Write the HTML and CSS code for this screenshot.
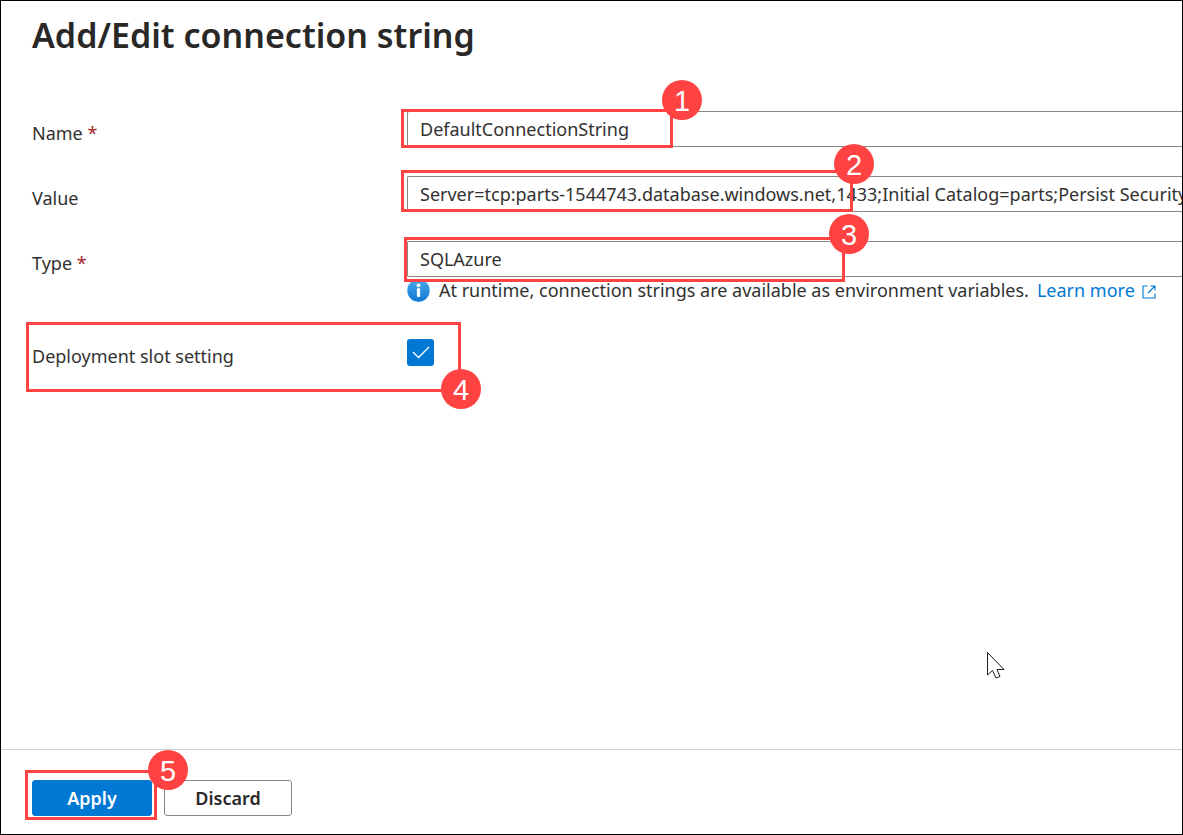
FILE: index.html
```html
<!DOCTYPE html>
<html lang="en">
<head>
<meta charset="utf-8">
<meta name="viewport" content="width=device-width, initial-scale=1">
<title>Add/Edit connection string</title>
<link rel="stylesheet" href="styles.css">
</head>
<body>
<form class="panel">
  <header class="panel-header">
    <h1 class="title">Add/Edit connection string</h1>
  </header>

  <main class="fields">
    <div class="row">
      <label class="label" for="name">Name <span class="required">*</span></label>
      <div class="control">
        <input class="box" id="name" type="text" value="DefaultConnectionString" required>
        <div class="callout callout-name"><span class="badge">1</span></div>
      </div>
    </div>
    <div class="row">
      <label class="label" for="value">Value</label>
      <div class="control">
        <input class="box" id="value" type="text" value="Server=tcp:parts-1544743.database.windows.net,1433;Initial Catalog=parts;Persist Security Info=False">
        <div class="callout callout-value"><span class="badge">2</span></div>
      </div>
    </div>
    <div class="row">
      <label class="label" for="type">Type <span class="required">*</span></label>
      <div class="control">
        <select class="box" id="type" required>
          <option selected>SQLAzure</option>
        </select>
        <p class="hint">
          <svg class="info-icon" viewBox="0 0 23 23" aria-hidden="true">
            <defs>
              <linearGradient id="info-fill" x1="0" y1="0" x2="0" y2="1">
                <stop offset="0" stop-color="#4aa9ee"/>
                <stop offset="1" stop-color="#0f78d4"/>
              </linearGradient>
            </defs>
            <circle cx="11.5" cy="11.5" r="11.2" fill="url(#info-fill)"/>
            <circle cx="11.5" cy="6.3" r="1.9" fill="#fff"/>
            <rect x="9.9" y="9.3" width="3.2" height="8.8" rx="1" fill="#fff"/>
          </svg>
          <span class="hint-text">At runtime, connection strings are available as environment variables.</span>
          <a class="link" href="#">Learn more
            <svg class="external-icon" viewBox="0 0 14 14" aria-hidden="true">
              <path d="M5.5 1H1v12h12V8.500M8.500 1H13v4.500M13 1L6 8" fill="none" stroke="currentColor" stroke-width="1.1"/>
            </svg>
          </a>
        </p>
        <div class="callout callout-type"><span class="badge">3</span></div>
      </div>
    </div>
    <div class="row slot-row">
      <label class="label" for="slot">Deployment slot setting</label>
      <div class="control check-control">
        <input class="check" id="slot" type="checkbox" checked>
        <svg class="tick" viewBox="0 0 27 27" aria-hidden="true">
          <path d="M6 13l5.500 5.500L22 8" fill="none" stroke="#fff" stroke-width="1.400"/>
        </svg>
      </div>
      <div class="callout callout-slot"><span class="badge">4</span></div>
    </div>
  </main>

  <footer class="actions">
    <button class="button primary" type="button">Apply</button>
    <button class="button" type="button">Discard</button>
    <div class="callout callout-apply"><span class="badge">5</span></div>
  </footer>

  <svg class="pointer" viewBox="0 0 20 29" aria-hidden="true">
    <path d="M1.500 1.500V24l5-4.500L10 27l4-1.500-3-7h7z" fill="#fff" stroke="#1c1c28" stroke-width="1"/>
  </svg>
</form>
</body>
</html>
```
FILE: styles.css
```css
* {
  box-sizing: border-box;
}

body {
  margin: 0;
  background: #fff;
  color: #323130;
  font: 18px/26px "Noto Sans", "Open Sans", sans-serif;
}

.panel {
  position: relative;
  display: flex;
  flex-direction: column;
  min-height: 100vh;
  border: 1px solid #000;
  overflow: hidden;
}

.panel-header {
  padding: 11px 31px 0;
}

.title {
  margin: 0;
  color: #292827;
  font-size: 34px;
  font-weight: 600;
  line-height: 46px;
}

.fields {
  flex: 1;
  display: flex;
  flex-direction: column;
  gap: 29px;
  padding: 53px 0 24px 31px;
}

.row {
  position: relative;
  display: grid;
  grid-template-columns: 375px minmax(0, 1fr);
}

.label {
  padding-top: 9px;
  justify-self: start;
}

.required {
  color: #a4262c;
}

.control {
  position: relative;
}

.box {
  display: block;
  width: 100%;
  height: 36px;
  padding: 0 0 0 12px;
  border: 1px solid #8a8886;
  border-right: 0;
  border-radius: 2px 0 0 2px;
  background: #fff;
  color: #323130;
  font: inherit;
  appearance: none;
}

.hint {
  display: flex;
  align-items: center;
  margin: 0;
  white-space: nowrap;
}

.info-icon {
  flex: none;
  width: 23px;
  height: 23px;
  margin-right: 9px;
}

.hint-text {
  margin-right: 8px;
}

.link {
  color: #0078d4;
  text-decoration: none;
}

.external-icon {
  width: 14px;
  height: 14px;
  margin-left: 3px;
  vertical-align: -2px;
}

.slot-row {
  margin-top: 7px;
}

.slot-row .label {
  padding-top: 4px;
}

.check-control {
  display: flex;
}

.check {
  width: 27px;
  height: 27px;
  margin: 0;
  border-radius: 3px;
  background: #0078d4;
  appearance: none;
}

.tick {
  position: absolute;
  top: 0;
  left: 0;
  width: 27px;
  height: 27px;
  pointer-events: none;
}

.actions {
  position: relative;
  display: flex;
  gap: 12px;
  padding: 30px 31px 18px;
  border-top: 1px solid #d2d0ce;
}

.button {
  width: 128px;
  height: 36px;
  padding: 0;
  border: 1px solid #8a8886;
  border-radius: 3px;
  background: #fff;
  color: #292827;
  font: inherit;
  font-weight: 600;
}

.primary {
  width: 120px;
  border-color: #0078d4;
  background: #0078d4;
  color: #fff;
}

.callout {
  position: absolute;
  z-index: 1;
  border: 3px solid #ff4343;
  pointer-events: none;
}

.badge {
  position: absolute;
  width: 40px;
  height: 40px;
  border-radius: 50%;
  background: #ff4343;
  color: #fff;
  font: 29px/42px "Liberation Sans", Arial, sans-serif;
  text-align: center;
}

.callout-name {
  top: -2px;
  left: -6px;
  width: 272px;
  height: 39px;
}

.callout-name .badge {
  top: -32px;
  right: -32px;
}

.callout-value {
  top: -6px;
  left: -6px;
  width: 452px;
  height: 42px;
}

.callout-value .badge {
  top: -29px;
  right: -24px;
}

.callout-type {
  top: -4px;
  left: -3px;
  width: 441px;
  height: 45px;
}

.callout-type .badge {
  top: -26px;
  right: -27px;
}

.callout-slot {
  top: -17px;
  left: -6px;
  width: 435px;
  height: 70px;
}

.callout-slot .badge {
  right: -23px;
  bottom: -20px;
}

.callout-apply {
  top: 20px;
  left: 24px;
  width: 132px;
  height: 50px;
}

.callout-apply .badge {
  top: -23px;
  right: -34px;
}

.pointer {
  position: absolute;
  top: 650px;
  left: 985px;
  width: 20px;
  height: 29px;
  pointer-events: none;
}
```
